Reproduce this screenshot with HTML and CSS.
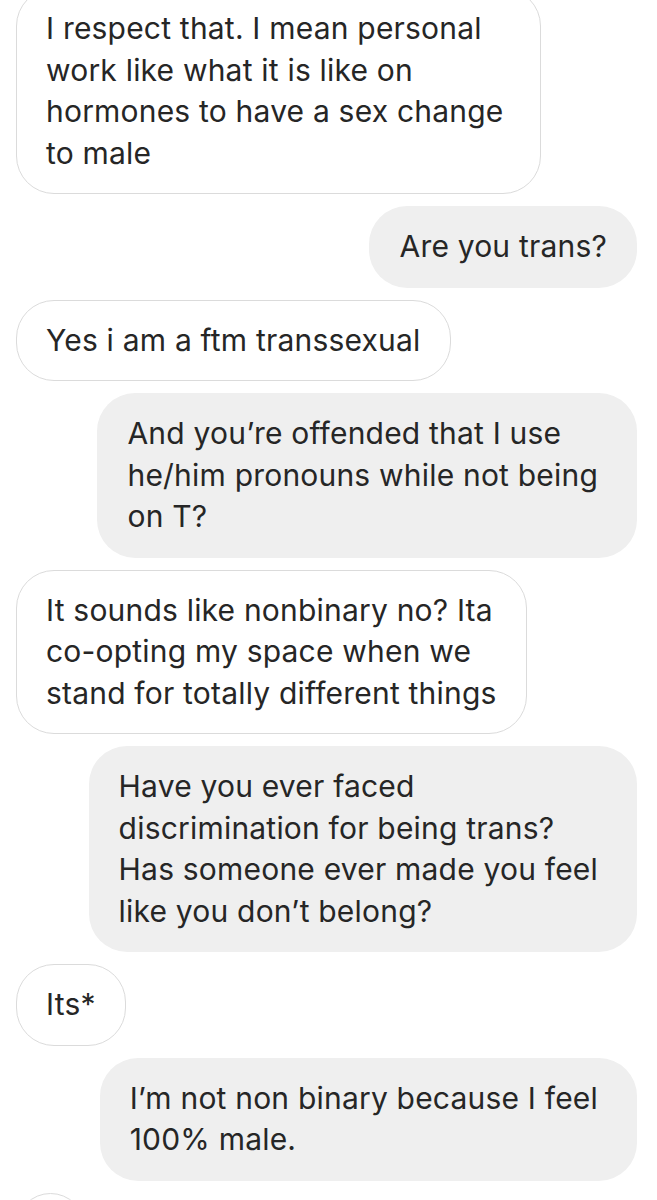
FILE: index.html
```html
<!DOCTYPE html>
<html lang="en">
<head>
    <meta charset="UTF-8">
    <meta name="viewport" content="width=device-width, initial-scale=1.0">
    <title>Messages</title>
    <link rel="stylesheet" href="styles.css">
</head>
<body>

<div class="chat">
    <div class="bubble received wrapped">I respect that. I mean personal<br>work like what it is like on<br>hormones to have a sex change<br>to male</div>
    <div class="bubble sent">Are you trans?</div>
    <div class="bubble received">Yes i am a ftm transsexual</div>
    <div class="bubble sent wrapped">And you’re offended that I use<br>he/him pronouns while not being<br>on T?</div>
    <div class="bubble received">It sounds like nonbinary no? Ita<br>co-opting my space when we<br>stand for totally different things</div>
    <div class="bubble sent wrapped">Have you ever faced<br>discrimination for being trans?<br>Has someone ever made you feel<br>like you don’t belong?</div>
    <div class="bubble received">Its*</div>
    <div class="bubble sent wrapped">I’m not non binary because I feel<br>100% male.</div>
    <div class="bubble received">&nbsp;</div>
</div>

</body>
</html>
```

FILE: styles.css
```css
body {
    margin: 0;
    background-color: #fff;
    color: #262626;
    font-family: Inter, "Noto Sans", sans-serif;
    overflow: hidden;
}

.chat {
    display: flex;
    flex-direction: column;
    gap: 12px;
    margin-top: -12px; /* first message is cut by the top of the screen */
}

.bubble {
    padding: 20px 30px;
    font-size: 30px;
    line-height: 41.5px;
    letter-spacing: 0.2px;
    border-radius: 38px;
    white-space: nowrap;
}

.received {
    align-self: flex-start;
    margin-left: 16px;
    padding: 19px 29px;
    border: 1px solid #dbdbdb;
    background-color: #fff;
}

.sent {
    align-self: flex-end;
    margin-right: 20px;
    background-color: #efefef;
}

/* wrapped messages keep a bit more room on the right */
.wrapped {
    padding-right: 39px;
}

.received.wrapped {
    padding-right: 37px;
}
```
